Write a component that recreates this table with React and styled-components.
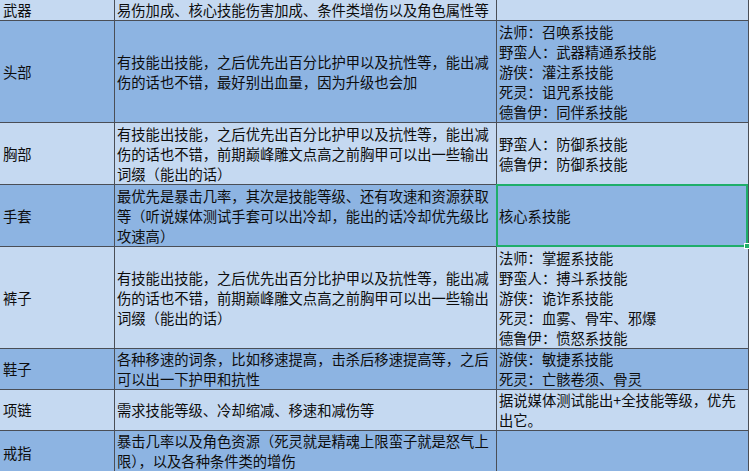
import styled, { createGlobalStyle } from "styled-components";

const GlobalStyle = createGlobalStyle`
  html, body {
    margin: 0;
    padding: 0;
    background: #ffffff;
    overflow: hidden;
  }
  body {
    font-family: "Noto Sans CJK SC", "Liberation Sans", sans-serif;
    color: #0d0d0d;
  }
`;

const ROWS = [
  {
    name: "武器",
    height: 20,
    tone: "light",
    effect: ["易伤加成、核心技能伤害加成、条件类增伤以及角色属性等"],
    skills: [],
  },
  {
    name: "头部",
    height: 101,
    tone: "dark",
    effect: [
      "有技能出技能，之后优先出百分比护甲以及抗性等，能出减",
      "伤的话也不错，最好别出血量，因为升级也会加",
    ],
    skills: [
      "法师：召唤系技能",
      "野蛮人：武器精通系技能",
      "游侠：灌注系技能",
      "死灵：诅咒系技能",
      "德鲁伊：同伴系技能",
    ],
  },
  {
    name: "胸部",
    height: 61,
    tone: "light",
    effect: [
      "有技能出技能，之后优先出百分比护甲以及抗性等，能出减",
      "伤的话也不错，前期巅峰雕文点高之前胸甲可以出一些输出",
      "词缀（能出的话）",
    ],
    skills: ["野蛮人：防御系技能", "德鲁伊：防御系技能"],
  },
  {
    name: "手套",
    height: 61,
    tone: "dark",
    effect: [
      "最优先是暴击几率，其次是技能等级、还有攻速和资源获取",
      "等（听说媒体测试手套可以出冷却，能出的话冷却优先级比",
      "攻速高）",
    ],
    skills: ["核心系技能"],
    selected: true,
  },
  {
    name: "裤子",
    height: 101,
    tone: "light",
    effect: [
      "有技能出技能，之后优先出百分比护甲以及抗性等，能出减",
      "伤的话也不错，前期巅峰雕文点高之前胸甲可以出一些输出",
      "词缀（能出的话）",
    ],
    skills: [
      "法师：掌握系技能",
      "野蛮人：搏斗系技能",
      "游侠：诡诈系技能",
      "死灵：血雾、骨牢、邪爆",
      "德鲁伊：愤怒系技能",
    ],
  },
  {
    name: "鞋子",
    height: 40,
    tone: "dark",
    effect: [
      "各种移速的词条，比如移速提高，击杀后移速提高等，之后",
      "可以出一下护甲和抗性",
    ],
    skills: ["游侠：敏捷系技能", "死灵：亡骸卷须、骨灵"],
  },
  {
    name: "项链",
    height: 40,
    tone: "light",
    effect: ["需求技能等级、冷却缩减、移速和减伤等"],
    skills: ["据说媒体测试能出+全技能等级，优先", "出它。"],
  },
  {
    name: "戒指",
    height: 40,
    tone: "dark",
    effect: [
      "暴击几率以及角色资源（死灵就是精魂上限蛮子就是怒气上",
      "限），以及各种条件类的增伤",
    ],
    skills: [],
  },
];

const Sheet = styled.div`
  display: grid;
  grid-template-columns: 114px 381px 251px;
  grid-template-rows: ${(props) => props.$rows};
  gap: 1px;
  padding-right: 1px;
  width: max-content;
  background: #4a4e56;
`;

const Cell = styled.div`
  position: relative;
  display: flex;
  flex-direction: column;
  justify-content: center;
  padding: 0 2px;
  background: ${(props) => (props.$tone === "dark" ? "#8db4e2" : "#c5d9f1")};
  font-size: 14.3px;
  line-height: 20px;
  overflow: hidden;
`;

const NameCell = styled(Cell)`
  padding-left: 3px;
  padding-top: ${(props) => (props.$last ? "3px" : "0")};
`;

const SelectedCell = styled(Cell)`
  overflow: visible;
  &::after {
    content: "";
    position: absolute;
    top: -1px;
    left: -1px;
    right: 0;
    bottom: -1px;
    border: 2px solid #1fae6a;
    pointer-events: none;
  }
`;

const Handle = styled.span`
  position: absolute;
  right: -2px;
  bottom: -3px;
  width: 4px;
  height: 4px;
  background: #1fae6a;
  border: 1px solid #ffffff;
  z-index: 2;
`;

const Line = styled.div`
  white-space: nowrap;
`;

const Lines = ({ items }) =>
  items.map((text, index) => <Line key={index}>{text}</Line>);

export default function App() {
  const rowHeights = ROWS.map((row) => `${row.height}px`).join(" ");

  return (
    <>
      <GlobalStyle />
      <Sheet $rows={rowHeights}>
        {ROWS.map((row, index) => {
          const SkillCell = row.selected ? SelectedCell : Cell;
          return [
            <NameCell
              key={`${row.name}-n`}
              $tone={row.tone}
              $last={index === ROWS.length - 1}
            >
              <Line>{row.name}</Line>
            </NameCell>,
            <Cell key={`${row.name}-e`} $tone={row.tone}>
              <Lines items={row.effect} />
            </Cell>,
            <SkillCell key={`${row.name}-s`} $tone={row.tone}>
              <Lines items={row.skills} />
              {row.selected && <Handle />}
            </SkillCell>,
          ];
        })}
      </Sheet>
    </>
  );
}
